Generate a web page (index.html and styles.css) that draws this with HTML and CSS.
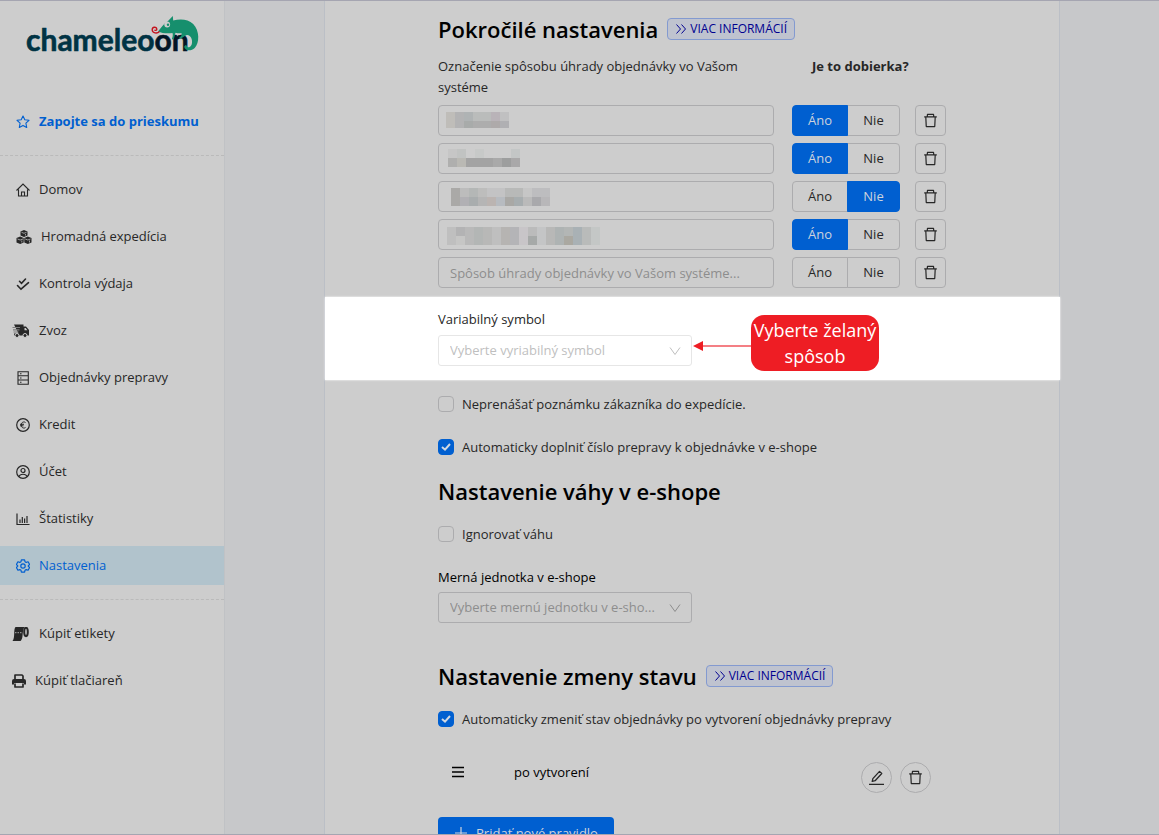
FILE: index.html
```html
<!DOCTYPE html>
<html lang="sk">
<head>
<meta charset="utf-8">
<meta name="viewport" content="width=device-width, initial-scale=1">
<title>Chameleoon – Nastavenia</title>
<link rel="stylesheet" href="styles.css">
</head>
<body>
<svg class="sprite" aria-hidden="true">
  <symbol id="i-trash" viewBox="64 64 896 896"><path fill="currentColor" d="M360 184h-8c4.400 0 8-3.600 8-8v8h304v-8c0 4.400 3.600 8 8 8h-8v72h72v-80c0-35.300-28.700-64-64-64H352c-35.300 0-64 28.700-64 64v80h72v-72zm504 72H160c-17.700 0-32 14.300-32 32v32c0 4.400 3.600 8 8 8h60.400l24.700 523c1.600 34.100 29.800 61 63.900 61h454c34.200 0 62.300-26.800 63.900-61l24.700-523H888c4.400 0 8-3.600 8-8v-32c0-17.700-14.300-32-32-32zM731.300 840H292.700l-24.200-512h487l-24.200 512z"/></symbol>
  <symbol id="i-chevron" viewBox="0 0 12 12"><path d="M1 2.500 6 9.500 11 2.500" fill="none" stroke="currentColor" stroke-width="1"/></symbol>
  <symbol id="i-double" viewBox="0 0 12 12"><path d="M1.500 1.500 5.500 6 1.500 10.500M6.500 1.500 10.500 6 6.500 10.500" fill="none" stroke="currentColor" stroke-width="1"/></symbol>
</svg>

<div class="app">
  <aside class="sidebar">
    <a class="logo" href="#" aria-label="chameleoon">
      <svg viewBox="0 0 180 48" width="180" height="48">
        <text class="logo-text" x="2" y="42">chamele<tspan>o</tspan><tspan class="logo-dark">on</tspan></text>
        <path fill="#168f6d" d="M134 22.500C137 19 139.500 14.500 144 12L148.800 7l.4 4.500c7-2 15-1.500 20 3.500 6.500 6.500 6.500 19 1.500 24-3.500 3.500-9.500 3-10.500-1 .2-1.800 1.800-2 2.500-1.300.3 1.500 1.500 2 3 1.300 2.800-1.500 3-6.500 1.300-9.500-1.300-2.200-3-3-4.800-2.300-2.500 1-4 3.300-6.400 3.500-1-.2-.8-1.300.3-1.700 1.300-.8 1.700-2.200 1.500-3.800-2 .3-4 .2-6-.5-1 1.500-.5 4.500-2.300 6.500-1 .6-1.700-.2-1.200-1 .8-1.500.9-3.200.4-5.200-4 .5-10 .6-14.500-1.500z"/>
        <circle cx="143.200" cy="15.500" r="2.900" fill="#cdcdcd"/><circle cx="144" cy="15.800" r="1.200" fill="#168f6d"/>
        <path fill="none" stroke="#c4141e" stroke-width="1.400" d="M135.500 22.500c-2.500 2.500-7 1.500-7.300-1.500-.1-3.200 4.500-3.700 4.600-.8 0 1.400-1.800 1.500-2.300.5"/>
      </svg>
    </a>

    <nav class="menu" aria-label="Hlavné menu">
      <a class="item item-promo" href="#">
        <svg class="icon" viewBox="0 0 14 14"><path d="M7 1 8.800 4.800 13 5.300 9.900 8.200 10.700 12.500 7 10.400 3.300 12.500 4.100 8.200 1 5.300 5.200 4.800z" fill="none" stroke="currentColor" stroke-width="1.100" stroke-linejoin="round"/></svg>
        Zapojte sa do prieskumu</a>
      <hr class="rule">
      <a class="item" href="#">
        <svg class="icon" viewBox="0 0 14 14"><path d="M.5 7.500 7 1l6.500 6.500M2.500 6.500v6.500h9V6.500M5.500 13V9h3v4" fill="none" stroke="currentColor" stroke-width="1.100"/></svg>
        Domov</a>
      <a class="item" href="#">
        <svg class="icon icon-large" viewBox="0 0 16 14"><g fill="currentColor"><path d="M8 0l3.500 1.500v4L8 7 4.500 5.500v-4zM4.200 6.500 7.700 8v4.500L4.200 14 .5 12.500V8zM11.800 6.500 15.500 8v4.500L11.800 14 8.300 12.500V8z"/></g><path d="M5.500 2.300 8 3.300l2.500-1M1.500 9l2.700 1L7 9M9.200 9l2.600 1 2.700-1M5.800 10.500v2M13.500 10.500v2M9.500 4v1.500" fill="none" stroke="#cdcdcd" stroke-width=".7"/></svg>
        Hromadná expedícia</a>
      <a class="item" href="#">
        <svg class="icon" viewBox="0 0 14 14"><path d="M3.500 4.300 5.500 6.300 9.500 2M1.500 8.500 5 12.200 12.500 5.700" fill="none" stroke="currentColor" stroke-width="1.600" stroke-linecap="round"/></svg>
        Kontrola výdaja</a>
      <a class="item item-out" href="#">
        <svg class="icon icon-truck" viewBox="0 0 18 14"><path fill="currentColor" d="M2 .5h9.500V2.500h2.500L17 6v5.500H2V9.500h4.500z"/><path d="M.5 3.500H8M1 5.800h6.500M1.500 8h5" stroke="#7d7d7d" stroke-width="1.200"/><path d="M12.500 4h1.200l1.700 2.200h-2.900z" fill="#cdcdcd"/><g fill="#272727" stroke="#cdcdcd" stroke-width="1"><circle cx="5" cy="11.500" r="2"/><circle cx="13" cy="11.500" r="2"/></g></svg>
        Zvoz</a>
      <a class="item" href="#">
        <svg class="icon" viewBox="0 0 14 14"><path d="M2 .7h10.300v12.600H2zM2 4.800h10.300M2 9h10.300M4 2.800h1.500M4 7h1.500M4 11.200h1.500" fill="none" stroke="currentColor" stroke-width="1.100"/></svg>
        Objednávky prepravy</a>
      <a class="item" href="#">
        <svg class="icon" viewBox="0 0 14 14"><path d="M9.500 4.500C8 3.300 5.300 4 5.300 7s2.700 3.700 4.200 2.500M4 6.300h4M4 7.800h3.500" fill="none" stroke="currentColor" stroke-width="1"/><circle cx="7" cy="7" r="6.300" fill="none" stroke="currentColor" stroke-width="1.200"/></svg>
        Kredit</a>
      <a class="item" href="#">
        <svg class="icon" viewBox="0 0 14 14"><g fill="none" stroke="currentColor" stroke-width="1.200"><circle cx="7" cy="7" r="6.300"/><circle cx="7" cy="5.500" r="2"/><path d="M3 11.500c1-3 7-3 8 0"/></g></svg>
        Účet</a>
      <a class="item" href="#">
        <svg class="icon" viewBox="0 0 14 14"><path d="M1 1.500v11h12.500M4 11V7.500M6.300 11V5M8.600 11V6.500M11 11V4" fill="none" stroke="currentColor" stroke-width="1.200"/></svg>
        Štatistiky</a>
      <a class="item item-active" href="#" aria-current="page">
        <svg class="icon" viewBox="0 0 14 14"><g fill="none" stroke="currentColor" stroke-width="1.200" stroke-linejoin="round"><path d="M5.400.8h3.200l.4 1.900 1.200.7 1.900-.6 1.500 2.700-1.400 1.400v.2l1.400 1.400-1.500 2.700-1.900-.6-1.200.7-.4 1.900H5.400L5 11.300l-1.200-.7-1.900.6L.4 8.500 1.800 7.100v-.2L.4 5.500l1.500-2.700 1.900.6L5 2.700z"/><circle cx="7" cy="7" r="2.200"/></g></svg>
        Nastavenia</a>
      <hr class="rule">
      <a class="item item-out" href="#">
        <svg class="icon icon-truck" viewBox="0 0 18 14"><path fill="currentColor" d="M3.500 0h9C11 2 10.800 6 10.500 9c-.2 2.500-1 4-2 5H.5c1.500-2 1.500-4.500 1.700-7.500C2.300 3.500 2.500 1 3.500 0z"/><ellipse cx="14" cy="5" rx="1.800" ry="4.200" fill="none" stroke="currentColor" stroke-width="2"/><path d="M3 5.700h7" stroke="#cdcdcd" stroke-width=".8" stroke-dasharray="1.500 1"/></svg>
        Kúpiť etikety</a>
      <a class="item item-out" href="#">
        <svg class="icon" viewBox="0 0 14 14"><path d="M3 5V1h7l1 1v3M3 9.500V13h8V9.500" fill="none" stroke="currentColor" stroke-width="1.700" stroke-linejoin="round"/><path fill="currentColor" d="M2 5h10a2 2 0 0 1 2 2v3.500h-2V9H2v1.500H0V7a2 2 0 0 1 2-2z"/></svg>
        Kúpiť tlačiareň</a>
    </nav>
  </aside>

  <main class="main">
    <div class="panel">
      <section class="section section-first">
        <div class="heading">
          <h2>Pokročilé nastavenia</h2>
          <a class="tag" href="#"><svg class="tag-icon"><use href="#i-double"/></svg>VIAC INFORMÁCIÍ</a>
        </div>

        <div class="payments">
          <div class="pay-row pay-head">
            <p>Označenie spôsobu úhrady objednávky vo Vašom systéme</p>
            <strong>Je to dobierka?</strong>
          </div>

          <div class="pay-row">
            <div class="masked">
              <input class="input" type="text" aria-label="Spôsob úhrady 1">
              <svg class="mosaic mosaic-a" viewBox="0 0 63 16" width="63" height="16" shape-rendering="crispEdges"><path fill="#bfbdb9" d="M0 0h9v16H0z"/><path fill="#b3b3b4" d="M9 0h9v16H9z"/><path fill="#afb3b4" d="M18 0h9v9h-9z"/><path fill="#babcbb" d="M27 0h18v9H27z"/><path fill="#b9b3b8" d="M45 0h9v9h-9z"/><path fill="#c0c0c1" d="M54 0h9v9h-9z"/><path fill="#a8abaa" d="M18 9h9v7h-9z"/><path fill="#adadad" d="M27 9h18v7H27z"/><path fill="#aeaaaa" d="M45 9h9v7h-9z"/><path fill="#b0b0b3" d="M54 9h9v7h-9z"/></svg>
            </div>
            <div class="toggle" role="radiogroup" aria-label="Je to dobierka?">
              <label><input type="radio" name="cod1" checked><span>Áno</span></label><label><input type="radio" name="cod1"><span>Nie</span></label>
            </div>
            <button class="icon-btn" type="button" aria-label="Odstrániť"><svg><use href="#i-trash"/></svg></button>
          </div>

          <div class="pay-row">
            <div class="masked">
              <input class="input" type="text" aria-label="Spôsob úhrady 2">
              <svg class="mosaic mosaic-b" viewBox="0 0 72 18" width="72" height="18" shape-rendering="crispEdges"><path fill="#c6c6c6" d="M0 0h9v9H0z"/><path fill="#c1c3c2" d="M9 0h9v9H9z"/><path fill="#c7c9c8" d="M27 0h9v9h-9z"/><path fill="#c3c6c6" d="M63 0h9v9h-9z"/><path fill="#afafae" d="M0 9h9v9H0z"/><path fill="#bab9b4" d="M9 9h9v9H9z"/><path fill="#a3a3a3" d="M18 9h27v9H18z"/><path fill="#a9a9a9" d="M45 9h9v9h-9z"/><path fill="#9d9e9e" d="M54 9h9v9h-9z"/><path fill="#a9a8a9" d="M63 9h9v9h-9z"/></svg>
            </div>
            <div class="toggle" role="radiogroup" aria-label="Je to dobierka?">
              <label><input type="radio" name="cod2" checked><span>Áno</span></label><label><input type="radio" name="cod2"><span>Nie</span></label>
            </div>
            <button class="icon-btn" type="button" aria-label="Odstrániť"><svg><use href="#i-trash"/></svg></button>
          </div>

          <div class="pay-row">
            <div class="masked">
              <input class="input" type="text" aria-label="Spôsob úhrady 3">
              <svg class="mosaic mosaic-c" viewBox="0 0 99 18" width="99" height="18" shape-rendering="crispEdges"><path fill="#aaa9a7" d="M0 0h9v18H0z"/><path fill="#bcbcbc" d="M9 0h9v9H9z"/><path fill="#b4b7b6" d="M18 0h9v9h-9z"/><path fill="#bdbdbc" d="M27 0h9v9h-9z"/><path fill="#c3c3c4" d="M36 0h18v9H36z"/><path fill="#b8b9b8" d="M54 0h18v9H54z"/><path fill="#c6c6c6" d="M72 0h9v9h-9z"/><path fill="#bdbdbf" d="M81 0h18v9H81z"/><path fill="#b1b0b4" d="M9 9h9v9H9z"/><path fill="#a9adae" d="M18 9h9v9h-9z"/><path fill="#b5b5b5" d="M27 9h9v9h-9z"/><path fill="#bbb4b1" d="M36 9h9v9h-9z"/><path fill="#b7bbc0" d="M45 9h9v9h-9z"/><path fill="#a9a8a5" d="M54 9h9v9h-9z"/><path fill="#a7adaf" d="M63 9h9v9h-9z"/><path fill="#bababa" d="M72 9h9v9h-9z"/><path fill="#a9a9ac" d="M81 9h9v9h-9z"/><path fill="#b8b7b9" d="M90 9h9v9h-9z"/></svg>
            </div>
            <div class="toggle" role="radiogroup" aria-label="Je to dobierka?">
              <label><input type="radio" name="cod3"><span>Áno</span></label><label><input type="radio" name="cod3" checked><span>Nie</span></label>
            </div>
            <button class="icon-btn" type="button" aria-label="Odstrániť"><svg><use href="#i-trash"/></svg></button>
          </div>

          <div class="pay-row">
            <div class="masked">
              <input class="input" type="text" aria-label="Spôsob úhrady 4">
              <svg class="mosaic mosaic-d" viewBox="0 0 153 18" width="153" height="18" shape-rendering="crispEdges"><path fill="#bfbfbf" d="M0 0h9v18H0z"/><path fill="#b3b3b4" d="M9 0h9v9H9z"/><path fill="#c6c6c5" d="M9 9h9v9H9z"/><path fill="#b9b9b9" d="M18 0h9v18h-9z"/><path fill="#b3b6b5" d="M27 0h9v18h-9z"/><path fill="#b8b8b7" d="M36 0h9v18h-9z"/><path fill="#bfbfbf" d="M45 0h9v18h-9z"/><path fill="#b6b4b2" d="M54 0h9v18h-9z"/><path fill="#b4b4b7" d="M63 0h9v18h-9z"/><path fill="#c8c5c8" d="M72 0h9v18h-9z"/><path fill="#bbbbbb" d="M81 0h9v9h-9z"/><path fill="#a6a9a8" d="M81 9h9v9h-9z"/><path fill="#c4c5c6" d="M90 0h9v18h-9z"/><path fill="#b8b8b7" d="M99 0h9v18h-9z"/><path fill="#aeb3b3" d="M108 0h9v18h-9z"/><path fill="#b3b6b5" d="M117 0h9v9h-9z"/><path fill="#aaa8a1" d="M117 9h9v9h-9z"/><path fill="#a9b1b5" d="M126 0h9v18h-9z"/><path fill="#b9bbba" d="M135 0h9v18h-9z"/><path fill="#c4c7c6" d="M144 0h9v18h-9z"/></svg>
            </div>
            <div class="toggle" role="radiogroup" aria-label="Je to dobierka?">
              <label><input type="radio" name="cod4" checked><span>Áno</span></label><label><input type="radio" name="cod4"><span>Nie</span></label>
            </div>
            <button class="icon-btn" type="button" aria-label="Odstrániť"><svg><use href="#i-trash"/></svg></button>
          </div>

          <div class="pay-row">
            <input class="input" type="text" aria-label="Spôsob úhrady 5" placeholder="Spôsob úhrady objednávky vo Vašom systéme...">
            <div class="toggle" role="radiogroup" aria-label="Je to dobierka?">
              <label><input type="radio" name="cod5"><span>Áno</span></label><label><input type="radio" name="cod5"><span>Nie</span></label>
            </div>
            <button class="icon-btn" type="button" aria-label="Odstrániť"><svg><use href="#i-trash"/></svg></button>
          </div>
        </div>
      </section>

      <section class="section spotlight">
        <div class="field">
          <label for="symbol">Variabilný symbol</label>
          <div class="select">
            <select id="symbol"><option>Vyberte vyriabilný symbol</option></select>
            <svg class="caret"><use href="#i-chevron"/></svg>
          </div>
        </div>
        <div class="callout">
          <svg class="arrow" viewBox="0 0 58 56" width="58" height="56" aria-hidden="true"><path d="M10 31h48" stroke="#f0555b" stroke-width="1.500"/><path d="M0 31l10-5v10z" fill="#ee1d24"/></svg>
          <p class="bubble">Vyberte želaný spôsob</p>
        </div>
      </section>

      <section class="section section-rest">
        <label class="check"><input type="checkbox"> Neprenášať poznámku zákazníka do expedície.</label>
        <label class="check check-next"><input type="checkbox" checked> Automaticky doplniť číslo prepravy k objednávke v e-shope</label>

        <div class="heading heading-weight"><h2>Nastavenie váhy v e-shope</h2></div>
        <label class="check"><input type="checkbox"> Ignorovať váhu</label>
        <div class="field field-unit">
          <label for="unit">Merná jednotka v e-shope</label>
          <div class="select">
            <select id="unit"><option>Vyberte mernú jednotku v e-sho...</option></select>
            <svg class="caret"><use href="#i-chevron"/></svg>
          </div>
        </div>

        <div class="heading heading-state">
          <h2>Nastavenie zmeny stavu</h2>
          <a class="tag" href="#"><svg class="tag-icon"><use href="#i-double"/></svg>VIAC INFORMÁCIÍ</a>
        </div>
        <label class="check"><input type="checkbox" checked> Automaticky zmeniť stav objednávky po vytvorení objednávky prepravy</label>

        <div class="rule-row">
          <svg class="grip" viewBox="0 0 12 12" width="12" height="12"><path d="M0 1.500h12M0 6h12M0 10.500h12" stroke="#000" stroke-width="1.700"/></svg>
          <span class="rule-name">po vytvorení</span>
          <button class="icon-btn round" type="button" aria-label="Upraviť"><svg viewBox="0 0 14 14"><path d="M0 13.400h14M3 10.700l.6-2.700L9.800 1.300l2.100 2L5.700 10z" fill="none" stroke="currentColor" stroke-width="1.200" stroke-linejoin="round"/></svg></button>
          <button class="icon-btn round" type="button" aria-label="Odstrániť"><svg><use href="#i-trash"/></svg></button>
        </div>

        <button class="primary" type="button"><svg viewBox="0 0 14 14" width="14" height="14"><path d="M7 1v12M1 7h12" stroke="currentColor" stroke-width="1.200"/></svg>Pridať nové pravidlo</button>
      </section>
    </div>
  </main>
</div>
</body>
</html>
```

FILE: styles.css
```css
:root {
  --surface: #cdcdcd;
  --line: #acacae;
  --text: #272727;
  --muted: #8d8d8d;
  --blue: #005fd0;
}

* { box-sizing: border-box; }

body {
  margin: 0;
  color: var(--text);
  background: #c7c8ca;
  font: 13px/21px "Open Sans", "Noto Sans", sans-serif;
}

h2, p { margin: 0; }
a { color: inherit; text-decoration: none; }
button, input, select { font: inherit; color: inherit; }

.sprite { position: absolute; width: 0; height: 0; }

.app {
  display: flex;
  height: 100vh;
  overflow: hidden;
  border-top: 1px solid #a5a5b1;
  border-bottom: 1px solid #a5a5b1;
}

/* Sidebar */
.sidebar {
  flex: 0 0 225px;
  background: var(--surface);
  border-right: 1px solid #c0c2c5;
}

.logo { display: block; padding: 8px 0 0 24px; height: 101px; }
.logo svg { display: block; }
.logo-text {
  font: 700 30px Lato, sans-serif;
  fill: #003344;
  stroke: #003344;
  stroke-width: 0.6px;
  stroke-linejoin: round;
}
.logo-dark { fill: #031526; stroke: #031526; }

.menu { display: flex; flex-direction: column; gap: 8px; }

.item {
  display: flex;
  align-items: center;
  gap: 9px;
  height: 39px;
  padding: 0 16px;
}
.item-promo { color: var(--blue); font-weight: 700; }
.item-active { color: var(--blue); background: #b1c3cc; }
.item-out { padding-left: 12px; }

.icon { flex: none; width: 14px; height: 14px; }
.icon-large { width: 16px; }
.icon-truck { width: 18px; }

.rule {
  width: 100%;
  margin: 6px 0;
  border: 0;
  border-top: 1px dashed #bababa;
}

/* Main panel */
.main { flex: 1; min-width: 0; padding: 0 99px; overflow: hidden; }

.panel {
  background: var(--surface);
  border: solid #bbbfc6;
  border-width: 0 1px;
}

.section { padding: 0 113px; }
.section-first { padding-top: 12px; padding-bottom: 9px; }
.section-rest { display: flex; flex-direction: column; align-items: flex-start; padding-top: 13px; }

.heading { display: flex; align-items: center; gap: 9px; height: 32px; }
.heading h2 { color: #000; font-size: 22px; line-height: 32px; font-weight: 600; white-space: nowrap; }
.heading-weight { margin: 17px 0 16px; }
.heading-state { margin: 37px 0 16px; }

.tag {
  display: inline-flex;
  align-items: center;
  gap: 3px;
  height: 22px;
  padding: 0 7px;
  color: #00008f;
  background: #bfc3cf;
  border: 1px solid #839ad0;
  border-radius: 4px;
  font-size: 12px;
  line-height: 20px;
  white-space: nowrap;
}
.tag-icon { width: 12px; height: 12px; }

.payments { display: grid; gap: 7px; margin-top: 11px; }
.pay-row {
  display: grid;
  grid-template-columns: minmax(0, 1fr) 108px 31px;
  column-gap: 15px;
}
.pay-row > :first-child { margin-right: 3px; }
.pay-head { line-height: 21px; }
.pay-head strong { grid-column: 2 / 4; padding-left: 20px; }

.input {
  height: 31px;
  padding: 0 11px;
  background: transparent;
  border: 1px solid var(--line);
  border-radius: 4px;
}
.input::placeholder { color: var(--muted); opacity: 1; }

.masked { position: relative; display: grid; }
.mosaic { position: absolute; }
.mosaic-a { left: 8px; top: 7px; }
.mosaic-b { left: 10px; top: 6px; }
.mosaic-c { left: 13px; top: 7px; }
.mosaic-d { left: 9px; top: 8px; }

.toggle { display: grid; grid-template-columns: 56px 52px; height: 31px; }
.toggle label { position: relative; }
.toggle label + label { margin-left: -1px; }
.toggle input { position: absolute; inset: 0; margin: 0; opacity: 0; }
.toggle span {
  display: block;
  height: 31px;
  border: 1px solid var(--line);
  line-height: 29px;
  text-align: center;
}
.toggle label:first-child span { border-radius: 4px 0 0 4px; }
.toggle label:last-child span { border-radius: 0 4px 4px 0; }
.toggle input:checked + span {
  position: relative;
  z-index: 1;
  color: #cdd3dc;
  background: var(--blue);
  border-color: var(--blue);
}

.icon-btn {
  display: grid;
  place-items: center;
  width: 31px;
  height: 31px;
  padding: 0;
  background: transparent;
  border: 1px solid var(--line);
  border-radius: 4px;
}
.icon-btn svg { width: 15px; height: 15px; }
.round { border-radius: 50%; }

/* Spotlight row */
.spotlight {
  display: flex;
  gap: 1px;
  margin: 0 -1px 0 0;
  background: #fff;
  box-shadow: 0 0 2px #fff;
  position: relative;
  --line: #e6e6e6;
  --muted: #bfbfbf;
}
.spotlight .field { padding: 11px 0 14px; }

.field { flex: none; width: 254px; }
.field label { display: block; line-height: 22px; }
.spotlight .select { margin-top: 5px; }
.field-unit { margin: 21px 0 0; color: #000; }
.field-unit .select { margin-top: 4px; }

.select { display: grid; align-items: center; }
.select > * { grid-area: 1 / 1; }
.select select {
  appearance: none;
  width: 100%;
  height: 31px;
  padding: 0 32px 0 11px;
  color: var(--muted);
  background: transparent;
  border: 1px solid var(--line);
  border-radius: 3px;
}
.caret {
  justify-self: end;
  width: 12px;
  height: 12px;
  margin-right: 11px;
  color: var(--muted);
  pointer-events: none;
}

.callout { display: flex; padding-top: 18px; }
.arrow { flex: none; }
.bubble {
  width: 128px;
  height: 56px;
  padding: 2px 0;
  color: #fff;
  background: #ee1d24;
  border-radius: 13px;
  font-size: 18px;
  line-height: 26px;
  text-align: center;
}

.check { display: flex; align-items: center; gap: 8px; line-height: 22px; }
.check-next { margin-top: 21px; }
.check input {
  appearance: none;
  flex: none;
  width: 16px;
  height: 16px;
  margin: 0;
  border: 1px solid var(--line);
  border-radius: 4px;
}
.check input:checked {
  border-color: var(--blue);
  background: var(--blue) url("data:image/svg+xml,%3Csvg xmlns='http://www.w3.org/2000/svg' viewBox='0 0 14 14'%3E%3Cpath d='M3 7 6 9.700 11 4' fill='none' stroke='%23d0d8e2' stroke-width='2'/%3E%3C/svg%3E") center / 14px 14px no-repeat;
}

.rule-row {
  display: flex;
  align-self: stretch;
  gap: 8px;
  margin: 32px 15px 24px 14px;
}
.grip { margin-top: 4px; }
.rule-name { flex: 1; margin-left: 42px; color: #000; }

.primary {
  display: flex;
  align-items: center;
  justify-content: center;
  gap: 8px;
  width: 176px;
  height: 32px;
  color: #cdd3dc;
  background: var(--blue);
  border: 0;
  border-radius: 4px;
}
```
